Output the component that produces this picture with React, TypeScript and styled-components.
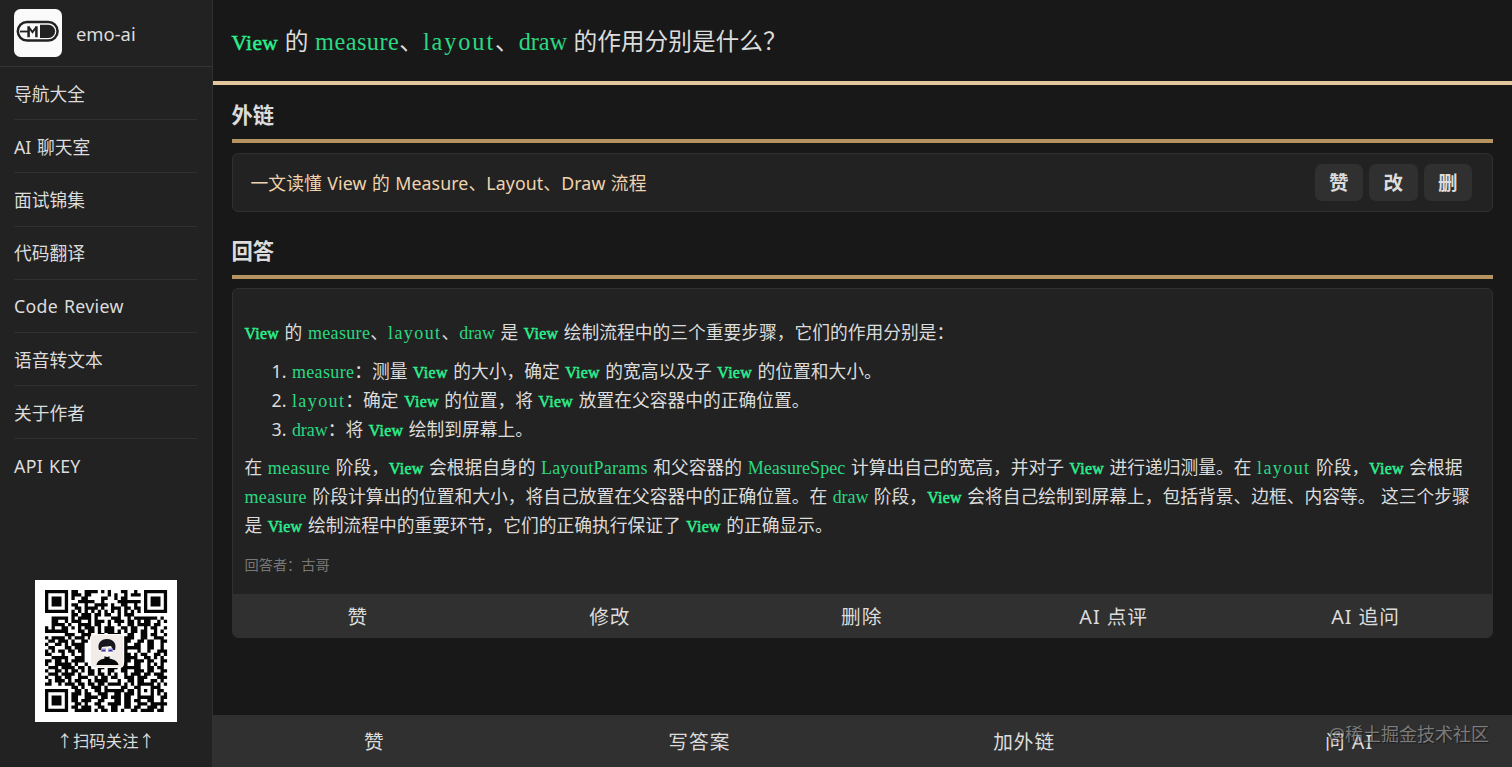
import React from 'react';
import styled, { createGlobalStyle } from 'styled-components';

const GlobalStyle = createGlobalStyle`
  * { box-sizing: border-box; }
  html, body { margin: 0; padding: 0; background: #181818; }
  body {
    font-family: "Noto Sans", "Noto Sans CJK SC", sans-serif;
    font-size: 17.75px;
    color: #dcdcdc;
    overflow: hidden;
  }
`;

const Page = styled.div`
  display: flex;
  width: 100vw;
  height: 100vh;
  position: relative;
`;

const Sidebar = styled.aside`
  width: 212.5px;
  flex: none;
  display: flex;
  flex-direction: column;
  background: #222;
  border-right: 1px solid #303030;
`;

const Brand = styled.div`
  height: 67px;
  flex: none;
  display: flex;
  align-items: center;
  gap: 14px;
  padding-left: 14px;
  border-bottom: 1px solid #333;
  font-size: 18.4px;
`;

const Nav = styled.nav`
  padding: 0 15px 0 14px;
  flex: 1;
`;

const NavItem = styled.a<{ $latin?: boolean }>`
  display: flex;
  align-items: center;
  height: 53.2px;
  border-bottom: 1px solid #303030;
  letter-spacing: ${p => (p.$latin ? 0.3 : 0)}px;
  word-spacing: 1px;
  padding-bottom: ${p => (p.$latin ? 0 : 0.5)}px;
  &:last-child { border-bottom: 0; }
`;

const Follow = styled.div`
  display: flex;
  flex-direction: column;
  align-items: center;
  height: 187.5px;
  flex: none;
  font-size: 16.4px;
  line-height: 37px;
`;

const Main = styled.main`
  flex: 1;
  min-width: 0;
  display: flex;
  flex-direction: column;
`;

const Question = styled.h1`
  margin: 0;
  height: 85px;
  flex: none;
  padding: 0 0 0 19px;
  line-height: 82px;
  border-bottom: 4px solid #e3c79c;
  font-size: 23.7px;
  font-weight: 400;
  word-spacing: 0.4px;
  white-space: nowrap;
`;

const Content = styled.div`
  flex: 1;
  padding: 0 19px;
`;

const SectionTitle = styled.h2<{ $top: number }>`
  margin: 0 0 9.5px;
  padding-top: ${p => p.$top}px;
  height: ${p => p.$top + 45}px;
  line-height: 33px;
  font-size: 21.3px;
  font-weight: 700;
  border-bottom: 4px solid #b59462;
`;

const LinkCard = styled.div`
  height: 59px;
  display: flex;
  align-items: center;
  padding: 0 20px 0 18px;
  background: #222;
  border: 1px solid #303030;
  border-radius: 6px;
`;

const LinkText = styled.a`
  flex: 1;
  color: #efd3ad;
  letter-spacing: 0.1px;
  word-spacing: 0.7px;
  padding-bottom: 1px;
`;

const Actions = styled.div`
  display: flex;
  gap: 6px;
`;

const SmallButton = styled.button`
  width: 48.5px;
  height: 37px;
  padding: 0;
  border: 0;
  border-radius: 7px;
  background: #303030;
  color: #dcdcdc;
  font: inherit;
  font-size: 19.5px;
  font-weight: 700;
  line-height: 37px;
`;

const Answer = styled.article`
  height: 350px;
  display: flex;
  flex-direction: column;
  background: #222;
  border: 1px solid #303030;
  border-radius: 6px;
  overflow: hidden;
`;

const AnswerBody = styled.div`
  flex: 1;
  padding: 29px 0 0 12px;
  line-height: 29px;
  word-spacing: 0.9px;
  white-space: nowrap;
`;

const Paragraph = styled.p`
  margin: 0 0 9.5px;
`;

const Steps = styled.ol`
  margin: 0 0 9.5px;
  padding: 0 0 0 27px;
  list-style: none;
`;

const Author = styled.div`
  font-size: 14.2px;
  color: #777;
`;

const CodeText = styled.code<{ $strong: boolean; $large?: boolean; $tracking: number }>`
  font-family: "Liberation Serif", serif;
  font-size: ${p => (p.$large ? 24.3 : 18) * (p.$strong ? 0.88 : 1)}px;
  line-height: 0;
  letter-spacing: ${p => p.$tracking}em;
  -webkit-text-stroke: ${p => (p.$strong ? '0.5px' : '0')};
  color: ${p => (p.$strong ? '#2bf08f' : '#2bd883')};
`;

/* Tracking that gives each identifier the same advance per character. */
const tracking: Record<string, number> = {
  View: 0.02,
  measure: 0.019,
  layout: 0.078,
  draw: -0.004,
  LayoutParams: 0.013,
  MeasureSpec: 0.004,
};

const Code = ({ children, $large }: { children: string; $large?: boolean }) => (
  <CodeText $strong={children === 'View'} $large={$large} $tracking={tracking[children] ?? 0}>
    {children}
  </CodeText>
);

const ButtonRow = styled.div<{ $height: number }>`
  height: ${p => p.$height}px;
  flex: none;
  display: flex;
  background: #303030;
`;

const RowButton = styled.button`
  flex: 1;
  padding: 0 1px 1px 0;
  border: 0;
  background: transparent;
  color: #dcdcdc;
  font: inherit;
  font-size: 19.7px;
  letter-spacing: 1px;
`;

const Watermark = styled.div`
  position: absolute;
  right: 23px;
  bottom: 20px;
  font-size: 18px;
  line-height: 26px;
  color: rgba(180, 180, 180, 0.6);
  text-shadow: 1px 1px 1px rgba(0, 0, 0, 0.45);
`;

const qrRows = [
  '#######.##..####.#.#...##..#..#######',
  '#.....#.###.##.....#.#..#.###.#.....#',
  '#.###.#.#..##....##..#.##.....#.###.#',
  '#.###.#...#####..#....#######.#.###.#',
  '#.###.#.##..#..####.#..##..#..#.###.#',
  '#.....#..##.####.#..###.##.##.#.....#',
  '#######.#.#.#.#.#.#.#.#.#.#.#.#######',
  '........##.###.##.##..#.###..........',
  '..#####.#.####.#....###..#.#######.#.',
  '..##..#.###..#.###.#.###.##.#.##..#.#',
  '..####.#..####.##..#..#..##.####.##..',
  '#.#..##.#.#.###.#.###..##.##..#.##..#',
  '#######...##.##.#.###.#.#.##.##..#.#.',
  '......###..###..##.####..##..##.##..#',
  '#.####.#.###.#..........###..##..###.',
  '.##.###.#..##...........##..##.##..##',
  '#..##.#.####............#..##..##..#.',
  '.##...##.###............#####..##..#.',
  '#.#.##.##.##............#...#..#..###',
  '##...#..#..#............##.#.##..##.#',
  '..#####..###............####..##.#.#.',
  '##.##.#.####............##.###.##..##',
  '#..#####.#..#..........##..##..#.#.#.',
  '.###.####.##.#..##.###.######..##.##.',
  '#..##.#.##.#.##.#..##..##..###.##..##',
  '.###.####.#..##.##.#.#..#.###.##.###.',
  '#..##.##..###..#.##.##..###.###...###',
  '.#.###.#.##..#.####...#..##.##..##.#.',
  '##..#.###.##.##.##.####.#.#.#####.#.#',
  '........##.#..###.#....##..##...###..',
  '#######..##.#..##.######.##.#.#.#.##.',
  '#.....#.###.##..###..##.###.#...#.#.#',
  '#.###.#.##..####.##.###.##..#####..##',
  '#.###.#.##.###..##...##.##.##..##..#.',
  '#.###.#..##.#..##..####.##..###.#####',
  '#.....#.##.###..##..##..##.##..###.#.',
  '#######..#####.#.##.##.#..##.####.##.',
];

const qrPath = qrRows
  .map((row, y) => Array.from(row).map((c, x) => (c === '#' ? `M${x} ${y}h1v1h-1z` : '')).join(''))
  .join('');

const QrSvg = styled.svg`
  display: block;
  flex: none;
`;

const QrCode = () => (
  <QrSvg width="142" height="142" viewBox="0 0 142 142">
    <rect width="142" height="142" fill="#fff" />
    <path d={qrPath} fill="#050505" transform="translate(10 10) scale(3.3)" />
    <rect x="55.5" y="54.5" width="33" height="33" rx="3.5" fill="#f1ece7" stroke="#fff" strokeWidth="1" />
    <path d="M61.5 85c1-4.500 4-5.500 8-6.500v-3h5v3c5 1 8 2.500 9 6.500z" fill="#080808" />
    <path d="M66 66h12v6c-1 6-10 7-12 0z" fill="#faf4ef" />
    <path d="M64 70c-2-7 2-11 8-11s10 4 8 11h-2l-2-4-9 1-1 3z" fill="#17171d" />
    <path d="M66 68.500h5v3.500h-5zM73 68.500h5v3.500h-5z" fill="#9794d8" />
    <path d="M67 70.500h3M74 70.500h3" stroke="#39357d" />
  </QrSvg>
);

const Logo = () => (
  <svg width="48" height="48" viewBox="0 0 48 48">
    <rect width="48" height="48" rx="6.500" fill="#fafafa" />
    <rect x="3.800" y="13" width="39.800" height="18.600" rx="9.300" fill="#fafafa" stroke="#222" strokeWidth="2.500" />
    <path d="M26 15.700h8.500a6.600 6.600 0 0 1 0 13.200H26z" fill="#222" />
    <path d="M6 22.500h8" stroke="#222" strokeWidth="1.800" />
    <path d="M14.600 28.200V17.200M22.400 28.200V17.200" stroke="#222" strokeWidth="2.500" />
    <path d="M14.600 18l3.900 5 3.900-5" fill="none" stroke="#222" strokeWidth="2" />
  </svg>
);

const V = () => <Code>View</Code>;

const navItems = ['导航大全', 'AI 聊天室', '面试锦集', '代码翻译', 'Code Review', '语音转文本', '关于作者', 'API KEY'];

export default function App() {
  return (
    <Page>
      <GlobalStyle />
      <Sidebar>
        <Brand><Logo />emo-ai</Brand>
        <Nav>{navItems.map(n => <NavItem key={n} $latin={/^[A-Za-z ]+$/.test(n)}>{n}</NavItem>)}</Nav>
        <Follow><QrCode /><span>↑扫码关注↑</span></Follow>
      </Sidebar>
      <Main>
        <Question>
          <Code $large>View</Code> 的 <Code $large>measure</Code>、<Code $large>layout</Code>、<Code $large>draw</Code> 的作用分别是什么？
        </Question>
        <Content>
          <SectionTitle $top={13}>外链</SectionTitle>
          <LinkCard>
            <LinkText>一文读懂 View 的 Measure、Layout、Draw 流程</LinkText>
            <Actions>
              <SmallButton>赞</SmallButton>
              <SmallButton>改</SmallButton>
              <SmallButton>删</SmallButton>
            </Actions>
          </LinkCard>
          <SectionTitle $top={22}>回答</SectionTitle>
          <Answer>
            <AnswerBody>
              <Paragraph>
                <V /> 的 <Code>measure</Code>、<Code>layout</Code>、<Code>draw</Code> 是 <V /> 绘制流程中的三个重要步骤，它们的作用分别是：
              </Paragraph>
              <Steps>
                <li>1. <Code>measure</Code>：测量 <V /> 的大小，确定 <V /> 的宽高以及子 <V /> 的位置和大小。</li>
                <li>2. <Code>layout</Code>：确定 <V /> 的位置，将 <V /> 放置在父容器中的正确位置。</li>
                <li>3. <Code>draw</Code>：将 <V /> 绘制到屏幕上。</li>
              </Steps>
              <Paragraph>
                在 <Code>measure</Code> 阶段，<V /> 会根据自身的 <Code>LayoutParams</Code> 和父容器的 <Code>MeasureSpec</Code> 计算出自己的宽高，并对子 <V /> 进行递归测量。在 <Code>layout</Code> 阶段，<V /> 会根据<br />
                <Code>measure</Code> 阶段计算出的位置和大小，将自己放置在父容器中的正确位置。在 <Code>draw</Code> 阶段，<V /> 会将自己绘制到屏幕上，包括背景、边框、内容等。 这三个步骤<br />
                是 <V /> 绘制流程中的重要环节，它们的正确执行保证了 <V /> 的正确显示。
              </Paragraph>
              <Author>回答者：古哥</Author>
            </AnswerBody>
            <ButtonRow $height={43}>
              {['赞', '修改', '删除', 'AI 点评', 'AI 追问'].map(t => <RowButton key={t}>{t}</RowButton>)}
            </ButtonRow>
          </Answer>
        </Content>
        <ButtonRow $height={52}>
          {['赞', '写答案', '加外链', '问 AI'].map(t => <RowButton key={t}>{t}</RowButton>)}
        </ButtonRow>
      </Main>
      <Watermark>@稀土掘金技术社区</Watermark>
    </Page>
  );
}
